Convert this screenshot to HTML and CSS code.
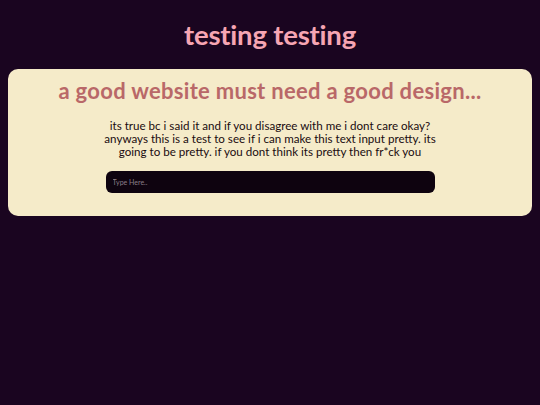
FILE: index.html
```html
<!DOCTYPE html>
<html>
<head>
<meta charset="utf-8">
<link rel="stylesheet" href="styles.css">
</head>
<body>
<h1 class="site-title">testing testing</h1>
<main class="card">
  <h2 class="card-heading">a good website must need a good design...</h2>
  <p class="card-text">its true bc i said it and if you disagree with me i dont care okay? anyways this is a test to see if i can make this text input pretty. its going to be pretty. if you dont think its pretty then fr*ck you</p>
  <input class="text-input" type="text" placeholder="Type Here..">
</main>
</body>
</html>
```
FILE: styles.css
```css
html, body {
  margin: 0;
  padding: 0;
  background: #1a0520;
  font-family: "Lato", "Open Sans", sans-serif;
}
body {
  padding: 0 8px;
}
.site-title {
  margin: 0;
  padding: 19px 0 18px;
  text-align: center;
  color: #f6a5b3;
  font-size: 27.5px;
  font-weight: 700;
  line-height: 32px;
  letter-spacing: -0.2px;
}
.card {
  background: #f5ebc9;
  border-radius: 10px;
  padding: 9px 0 23px;
  display: flex;
  flex-direction: column;
  align-items: center;
}
.card-heading {
  margin: 0;
  color: #b96868;
  font-size: 22px;
  font-weight: 700;
  line-height: 26px;
  letter-spacing: 0.3px;
}
.card-text {
  margin: 15px 0 0;
  width: 345px;
  text-align: center;
  color: #1a0b10;
  font-size: 11.6px;
  line-height: 13px;
}
.text-input {
  margin-top: 13px;
  width: 329px;
  height: 22px;
  box-sizing: border-box;
  border: none;
  border-radius: 6px;
  background: #0e030f;
  color: #eee;
  padding: 0 7px;
  font-family: "Lato", sans-serif;
  font-size: 7px;
  outline: none;
}
.text-input::placeholder {
  color: #8a7f88;
}
```
